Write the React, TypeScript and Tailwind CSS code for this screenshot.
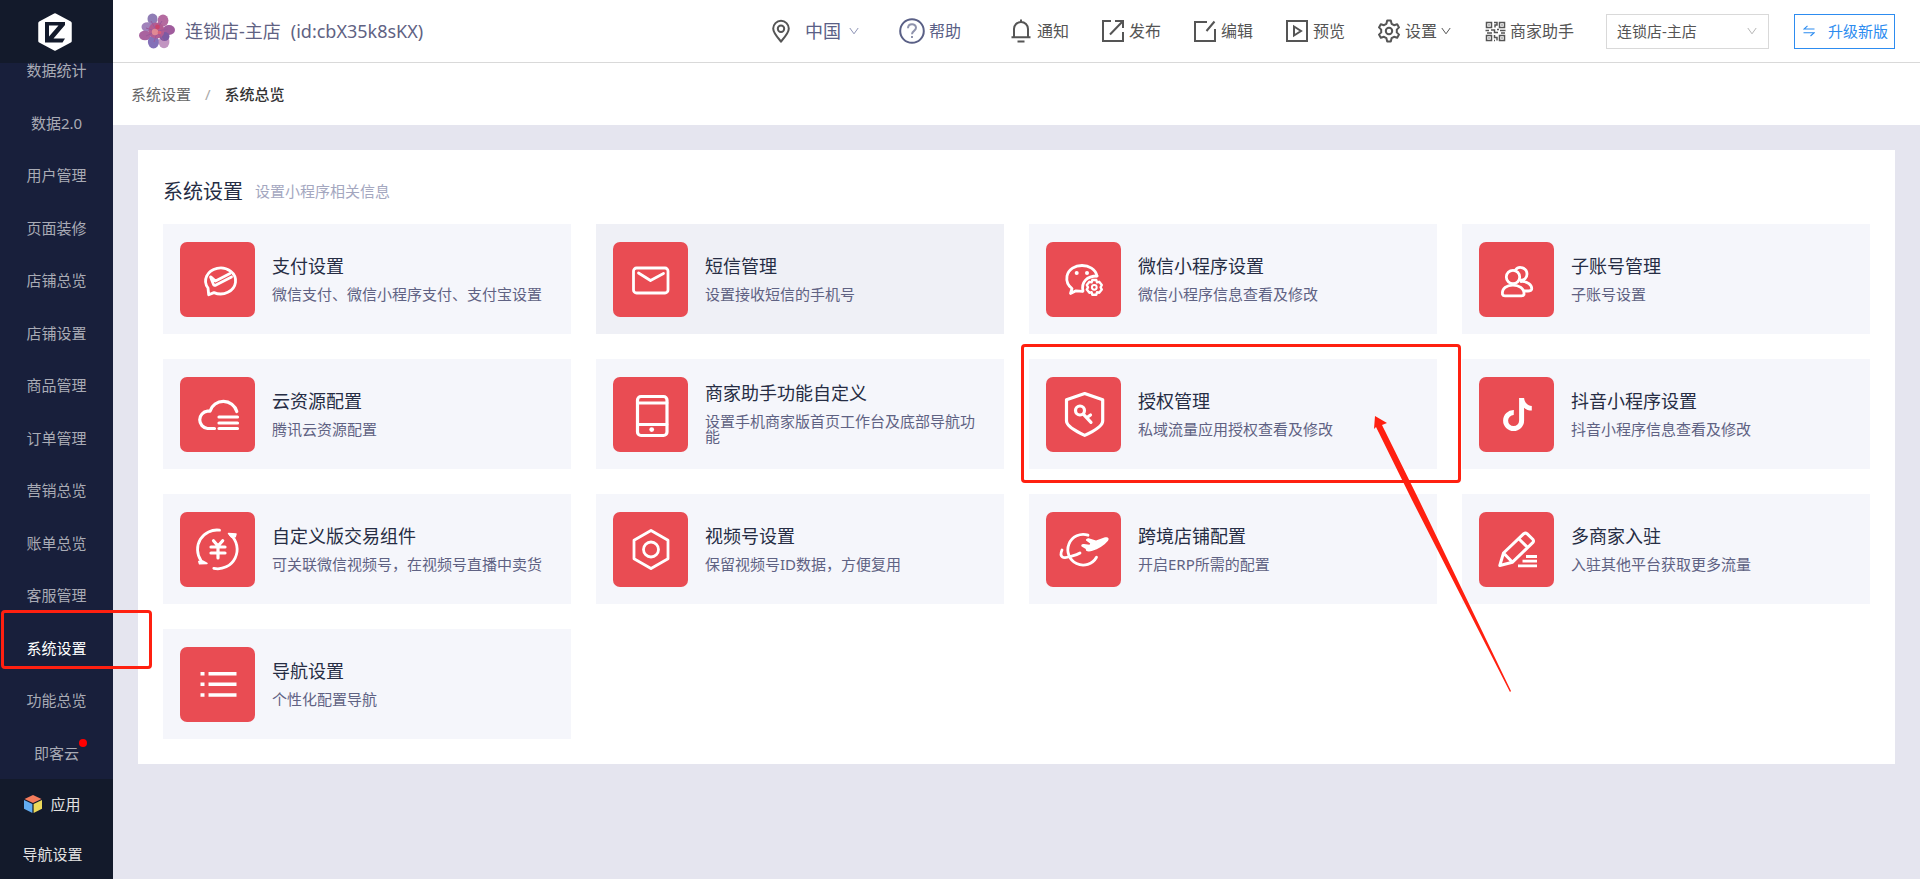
import { useState, type ReactNode } from "react";
import clsx from "clsx";

const NAV_ITEMS = [
  "数据统计",
  "数据2.0",
  "用户管理",
  "页面装修",
  "店铺总览",
  "店铺设置",
  "商品管理",
  "订单管理",
  "营销总览",
  "账单总览",
  "客服管理",
  "系统设置",
  "功能总览",
  "即客云",
];

type Setting = {
  title: string;
  desc: string;
  icon: ReactNode;
  hovered?: boolean;
  marked?: boolean;
};

// every icon is drawn on the 75x75 tile
const SETTINGS: Setting[] = [
  {
    title: "支付设置",
    desc: "微信支付、微信小程序支付、支付宝设置",
    icon: (
      <>
        <path d="M28 46 A15 13 0 1 1 34 50.6 L28.7 52.8 Z" />
        <path d="M30.5 35 L33.5 42.5 Q34.3 44 36 43 L51.5 35 M31 35 L35.5 39 L50 31.5" />
      </>
    ),
  },
  {
    title: "短信管理",
    desc: "设置接收短信的手机号",
    hovered: true,
    icon: (
      <>
        <rect x="20.5" y="26" width="34.5" height="25" rx="3" />
        <path d="M25.5 31 L37.5 38.5 L50.5 31.5" />
      </>
    ),
  },
  {
    title: "微信小程序设置",
    desc: "微信小程序信息查看及修改",
    icon: (
      <>
        <path d="M51 34 C48 20 24 20 21 34 C20 40 22 43.5 26 46.5 L24.5 51.5 L30 48.8 L36.5 49.3" />
        <path d="M37 49 C35 40 41 34 51 34" />
        <circle cx="30.7" cy="31" r="2" fill="white" stroke="none" />
        <circle cx="41" cy="31" r="2" fill="white" stroke="none" />
        <circle cx="48.3" cy="45.3" r="2.4" strokeWidth="2" />
        <path
          strokeWidth="2.4"
          d="M46.3 38 L50.3 38 L51 40.3 L53.2 39.8 L55.8 43 L54.6 45.3 L55.8 47.6 L53.2 50.8 L51 50.2 L50.3 52.8 L46.3 52.8 L45.6 50.2 L43.4 50.8 L40.8 47.6 L42 45.3 L40.8 43 L43.4 39.8 L45.6 40.3 Z"
        />
      </>
    ),
  },
  {
    title: "子账号管理",
    desc: "子账号设置",
    icon: (
      <>
        <circle cx="34" cy="35" r="6.7" />
        <path d="M23.5 52.5 C21.5 40 46 40 45 52.5 C44.5 54 43 53.8 42 53.8 H26 C25 53.8 24 53.8 23.5 52.5 Z" />
        <path d="M36.5 28 C40 23 48 26 48 32 C48 36 45 38.5 41.5 38 M42 39.5 C48 39 53.5 43 52.6 47.5 C52 49 50 49 46 49" />
      </>
    ),
  },
  {
    title: "云资源配置",
    desc: "腾讯云资源配置",
    icon: (
      <>
        <path
          strokeWidth="3.2"
          d="M34.5 51.5 H27.5 A8.7 8.7 0 0 1 27.5 34.2 H30 A14 14 0 0 1 56.8 34.5"
        />
        <path strokeWidth="3.2" d="M39 40 H57.5 M39 46 H57.5 M39 51.5 H57.5" />
      </>
    ),
  },
  {
    title: "商家助手功能自定义",
    desc: "设置手机商家版首页工作台及底部导航功能",
    icon: (
      <>
        <rect x="24.5" y="19.5" width="29.5" height="39" rx="3.5" strokeWidth="3.2" />
        <path d="M25 26 H54 M25 47.5 H54" />
        <circle cx="38.7" cy="52.6" r="2.4" fill="white" stroke="none" />
      </>
    ),
  },
  {
    title: "授权管理",
    desc: "私域流量应用授权查看及修改",
    marked: true,
    icon: (
      <>
        <path
          strokeWidth="3.2"
          d="M38.7 16.5 L56.7 22.8 V44 C56.7 49 46 55 38.7 58.4 C31.4 55 20.5 49 20.5 44 V22.8 Z"
        />
        <circle cx="34" cy="33.5" r="4.5" strokeWidth="3.2" />
        <path strokeWidth="3.2" d="M37.5 37.3 L45 45.3 M41 40.5 L44.5 38" />
      </>
    ),
  },
  {
    title: "抖音小程序设置",
    desc: "抖音小程序信息查看及修改",
    icon: (
      <>
        <path
          strokeWidth="5"
          strokeLinecap="butt"
          d="M34.8 35.6 A8 8 0 1 0 42.6 43.5 V21"
        />
        <path
          fill="white"
          stroke="none"
          d="M40.3 21 H45 C45.6 25.5 48.5 28.6 52.8 29 V33.6 C49.5 33.6 46.8 32.4 44.6 30.6 Z"
        />
      </>
    ),
  },
  {
    title: "自定义版交易组件",
    desc: "可关联微信视频号，在视频号直播中卖货",
    icon: (
      <>
        <path d="M39.5 18.2 A19.4 19.4 0 0 0 21 48.5 M50.5 22.8 A19.4 19.4 0 0 1 33.8 56.4" />
        <path fill="white" strokeWidth="1.5" d="M18.8 49.5 L22.5 49 L27 51.5 L19.5 51.8 Z M48.5 21.5 L56 22 L55.2 24.8 L51.5 25 Z" />
        <path strokeWidth="3.2" d="M33.5 28.7 L38 34 L42.7 28.7 M31 35 H45 M31 41 H45 M38 35 V46" />
      </>
    ),
  },
  {
    title: "视频号设置",
    desc: "保留视频号ID数据，方便复用",
    icon: (
      <>
        <path d="M38 18.5 L55 28.3 V46.7 L38 56.5 L21 46.7 V28.3 Z" />
        <circle cx="38" cy="37.5" r="7.5" />
      </>
    ),
  },
  {
    title: "跨境店铺配置",
    desc: "开启ERP所需的配置",
    icon: (
      <>
        <path d="M42 23.2 A15.3 15.3 0 1 0 50.5 45.2" />
        <path d="M16 38 C13 45 17 47 24 44.5 C28 43.5 31 43 34 41" />
        <path
          fill="white"
          stroke="none"
          d="M59 25.3 C62 24.6 63.8 26.5 61.8 29 C58 33.5 52 37 46.5 38.8 C43 40 39.5 39.8 39.8 37 L35.6 34.6 C34.6 33 36 31.5 38 32 L43.5 32.8 L44.2 31.5 L40 28.5 C39.6 26.8 41.5 25.8 43.5 26.4 L50 28.4 Z"
        />
      </>
    ),
  },
  {
    title: "多商家入驻",
    desc: "入驻其他平台获取更多流量",
    icon: (
      <>
        <path
          strokeWidth="3"
          d="M20.8 53.5 L24.5 41 L44.8 21.7 Q46.5 20.5 48 21.7 L54 27.5 Q55 29 54 30.3 L33.5 50.2 Z M24.5 41 L33.5 50.2 M40 27 L48.5 35.3"
        />
        <path strokeLinecap="butt" d="M47 44.5 H58 M43.5 49.2 H58 M39 53.8 H58" />
      </>
    ),
  },
  {
    title: "导航设置",
    desc: "个性化配置导航",
    icon: (
      <path
        strokeWidth="3.6"
        strokeLinecap="butt"
        d="M20.5 26.7 H24.5 M28.5 26.7 H56.5 M20.5 37.3 H24.5 M28.5 37.3 H56.5 M20.5 48 H24.5 M28.5 48 H56.5"
      />
    ),
  },
];

function Chevron({ className }: { className?: string }) {
  return (
    <svg viewBox="0 0 10 8" className={clsx("h-2 w-2.5", className)} fill="none" stroke="currentColor">
      <path d="M0.8 1 L5 6.8 L9.2 1" />
    </svg>
  );
}

function Logo() {
  return (
    <svg viewBox="0 0 34 38" className="h-[38px] w-[34px]">
      <path
        d="M17 2 L32 10 V28 L17 36 L2 28 V10 Z"
        fill="white"
        stroke="white"
        strokeWidth="3.5"
        strokeLinejoin="round"
      />
      <path d="M7 9 H27 V12 L15.5 25.5 H27 L24.5 29.5 H7 Z" fill="#131a2b" />
      <path d="M11 12.5 H20.5 L11 23.5 Z" fill="white" />
    </svg>
  );
}

function Flower() {
  return (
    <svg viewBox="0 0 36 36" className="size-9">
      <ellipse cx="13.5" cy="6" rx="5" ry="5.6" fill="#8f7db5" />
      <ellipse cx="24" cy="7.5" rx="5.4" ry="6" fill="#b46ba0" />
      <ellipse cx="8.5" cy="14" rx="6" ry="4.8" fill="#a183bb" />
      <ellipse cx="30" cy="17" rx="6" ry="5" fill="#a05c9d" />
      <ellipse cx="6" cy="22.5" rx="6" ry="4.8" fill="#a9639f" />
      <ellipse cx="14.5" cy="29" rx="5.6" ry="6.4" fill="#8471b8" />
      <ellipse cx="25" cy="29" rx="5.4" ry="6.2" fill="#c295c1" />
      <ellipse cx="25.5" cy="23.5" rx="5" ry="4.5" fill="#7c5aa2" />
      <circle cx="17.5" cy="17.5" r="8" fill="#b25d92" />
      <path
        d="M17 17 L12 8 M18 16 L23 8 M16 18 L7 15 M19 18 L29 16 M16 19 L7 23 M18 20 L15 29 M19 20 L25 28"
        stroke="#9a5a9c"
        strokeWidth="1"
      />
      <circle cx="16" cy="19" r="3.2" fill="#e08a94" />
      <circle cx="18.5" cy="14" r="2.4" fill="#c8456c" />
      <circle cx="20.5" cy="19.5" r="1.8" fill="#d8607a" />
    </svg>
  );
}

function Cube() {
  return (
    <svg viewBox="0 0 18 18" className="size-[18px]">
      <path d="M9 0 L17.5 4 L9 8 L0.5 4 Z" fill="#f47c5c" />
      <path d="M0 5 L8.4 9 V18 L0 13.8 Z" fill="#62adf2" />
      <path d="M18 5 L9.6 9 V18 L18 13.8 Z" fill="#ecd95a" />
    </svg>
  );
}

function ToolIcon({ children }: { children: ReactNode }) {
  return (
    <svg
      viewBox="0 0 24 24"
      className="size-6"
      fill="none"
      stroke="currentColor"
      strokeWidth="2"
    >
      {children}
    </svg>
  );
}

function Tool({ label, icon, className, children }: {
  label: string;
  icon: ReactNode;
  className?: string;
  children?: ReactNode;
}) {
  return (
    <button className={clsx("flex items-center gap-1 text-base", className ?? "text-[#555]")}>
      {icon}
      <span>{label}</span>
      {children}
    </button>
  );
}

function QrIcon() {
  return (
    <svg viewBox="0 0 21 21" className="size-[21px]" fill="none" stroke="currentColor" strokeWidth="1.5">
      <rect x="1.5" y="1.5" width="5" height="5" />
      <rect x="14.5" y="1.5" width="5" height="5" />
      <rect x="1.5" y="14.5" width="5" height="5" />
      <rect x="14.5" y="14.5" width="5" height="5" />
      <path d="M3.5 4 H4.5 M16.5 4 H17.5 M3.5 17 H4.5 M16.5 17 H17.5" />
      <path d="M9 1.5 H12 V4 H10 V6.5 M0.5 9.5 H4 M6 9 H9.5 V11.5 H13 M15 9.5 H20.5 M2 12 H7 M12 8.5 H14 M16 12 H20 M9.5 14 V16.5 H12 V19.5 M9 19.5 H10" />
    </svg>
  );
}

function Sidebar() {
  const [active, setActive] = useState("系统设置");

  return (
    <aside className="sticky top-0 z-20 flex h-screen w-[113px] shrink-0 flex-col bg-[#181f3b] text-[15px]">
      <div className="z-10 flex h-[63px] shrink-0 items-center justify-center bg-[#131a2b] pr-1">
        <Logo />
      </div>

      {/* the list is scrolled to its end, its first row slides under the logo */}
      <nav className="flex min-h-0 flex-1 flex-col justify-end">
        <ul className="flex h-[735px] shrink-0 flex-col">
          {NAV_ITEMS.map((item) => (
            <li key={item} className="relative flex flex-1">
              <button
                onClick={() => setActive(item)}
                className={clsx("flex-1 text-center", item === active ? "text-white" : "text-[#a9abb5]")}
              >
                <span className="relative">
                  {item}
                  {item === "即客云" && (
                    <i className="absolute -right-2 -top-1 size-2 rounded-full bg-[#ff0000]" />
                  )}
                </span>
              </button>
              {item === "系统设置" && (
                <span className="pointer-events-none absolute -top-3 left-px h-[59px] w-[151px] rounded-sm border-3 border-[#ff2010]" />
              )}
            </li>
          ))}
        </ul>
      </nav>

      <div className="z-10 flex shrink-0 flex-col bg-[#131a2b] pr-2 text-[#e2e2e2]">
        <button className="flex h-[50px] items-center justify-center gap-2">
          <Cube />
          应用
        </button>
        <button className="h-[50px]">导航设置</button>
      </div>
    </aside>
  );
}

function Header() {
  return (
    <header className="flex h-[63px] items-center justify-between border-b border-[#d9d9d9] bg-white pl-[26px] pr-[25px]">
      <div className="flex items-center gap-2.5 text-lg text-[#5f6283]">
        <Flower />
        <span>连锁店-主店</span>
        <span>(id:cbX35k8sKX)</span>
      </div>

      <div className="flex items-center gap-8">
        <button className="mr-2 flex items-center gap-3 text-lg text-[#5a6086]">
          <svg viewBox="0 0 24 24" className="size-6 text-[#555]" fill="none" stroke="currentColor" strokeWidth="2">
            <path d="M12 22.5 C8 18 4.2 14 4.2 9.6 A7.8 7.8 0 0 1 19.8 9.6 C19.8 14 16 18 12 22.5 Z" />
            <circle cx="12" cy="9.8" r="3.2" />
          </svg>
          <span className="flex items-center gap-2">
            中国
            <Chevron className="text-[#8d93b5]" />
          </span>
        </button>
        <Tool
          label="帮助"
          className="mr-4 text-[#5a6086]"
          icon={
            <svg viewBox="0 0 26 26" className="size-[26px]" fill="none" stroke="currentColor" strokeWidth="2">
              <circle cx="13" cy="13" r="11.8" />
              <path
                stroke="#8f93ac"
                d="M9 10.3 C9 5 17 5 17 9.8 C17 13 13 12.8 13 16.3 M13 18 V20"
              />
            </svg>
          }
        />
        <Tool
          label="通知"
          icon={
            <ToolIcon>
              <path d="M5 18 V10 A7 7 0 0 1 19 10 V18 M2.5 18.3 H21.5 M12 0.5 V3 M8.5 22.5 H15.5" />
            </ToolIcon>
          }
        />
        <Tool
          label="发布"
          icon={
            <ToolIcon>
              <path d="M10 2 H2 V22 H22 V13 M14 2 H22 V9 M21.5 2.5 L9 15.5" />
            </ToolIcon>
          }
        />
        <Tool
          label="编辑"
          icon={
            <ToolIcon>
              <path d="M14 3 H2 V22 H22 V10 M21.5 2.5 L13.5 12" />
            </ToolIcon>
          }
        />
        <Tool
          label="预览"
          icon={
            <ToolIcon>
              <path d="M2 2 H22 V22 H2 Z M9 7.5 V16.5 L16 12 Z" />
            </ToolIcon>
          }
        />
        <Tool
          label="设置"
          className="mr-0.5 text-[#555]"
          icon={
            <ToolIcon>
              <path
                strokeLinejoin="round"
                d="M10.2 1.5 H13.8 L14.6 4.8 L17 6.2 L20.2 5.2 L22 8.4 L19.8 10.6 V13.4 L22 15.6 L20.2 18.8 L17 17.8 L14.6 19.2 L13.8 22.5 H10.2 L9.4 19.2 L7 17.8 L3.8 18.8 L2 15.6 L4.2 13.4 V10.6 L2 8.4 L3.8 5.2 L7 6.2 L9.4 4.8 Z"
              />
              <circle cx="12" cy="12" r="3.2" />
            </ToolIcon>
          }
        >
          <Chevron />
        </Tool>
        <Tool label="商家助手" icon={<QrIcon />} />

        <div className="flex items-center gap-[25px]">
          <label className="relative flex items-center text-[15px] text-[#555]">
            <select
              aria-label="店铺"
              className="h-[35px] w-[163px] appearance-none border border-[#d9d9d9] bg-white pl-2.5 pr-8"
            >
              <option>连锁店-主店</option>
            </select>
            <Chevron className="pointer-events-none absolute right-3 text-[#b5b5b5]" />
          </label>
          <button className="flex h-[35px] w-[101px] items-center justify-between border border-[#2d8cf0] pl-2 pr-1.5 text-[15px] text-[#2d8cf0]">
            <svg viewBox="0 0 12 12" className="size-3" fill="none" stroke="currentColor" strokeWidth="1.1">
              <path d="M11.5 4 H1 L4.5 0.8 M0.5 7.8 H11 L7.5 11" />
            </svg>
            升级新版
          </button>
        </div>
      </div>
    </header>
  );
}

function SettingCard({ title, desc, icon, hovered, marked }: Setting) {
  return (
    <a
      href="#"
      className={clsx(
        "relative flex h-[110px] items-center gap-[17px] px-[17px]",
        hovered ? "bg-[#eff0f6]" : "bg-[#f5f6fb]",
      )}
    >
      <svg
        viewBox="0 0 75 75"
        className="size-[75px] shrink-0 rounded-[7px] bg-[#e94c53]"
        fill="none"
        stroke="white"
        strokeWidth="2.8"
        strokeLinecap="round"
        strokeLinejoin="round"
      >
        {icon}
      </svg>
      <div className="min-w-0">
        <h3 className="text-lg leading-[18px] text-[#262d44]">{title}</h3>
        <p className="mt-3 text-[15px] leading-[15px] text-[#5f6283]">{desc}</p>
      </div>

      {marked && (
        <>
          <span className="pointer-events-none absolute -bottom-3.5 -left-2 -right-6 -top-[15px] z-10 rounded-sm border-3 border-[#ff2010]" />
          <svg
            viewBox="0 0 137 276"
            className="pointer-events-none absolute left-[345px] top-[57px] z-10 h-[276px] w-[137px]"
          >
            <path d="M1 0 L13 7 L8 9 L11 15 L45 84 L137 275 L136 276 L38 84 L5 17 L2 11 L0 13 Z" fill="#ff2010" />
          </svg>
        </>
      )}
    </a>
  );
}

export default function App() {
  return (
    <div className="flex min-h-screen bg-[#e5e5ef] font-['Noto_Sans','Noto_Sans_CJK_SC',sans-serif]">
      <Sidebar />
      <div className="min-w-0 flex-1">
        <Header />
        <nav className="flex h-[62px] items-center gap-3.5 bg-white pl-[18px] text-[15px]">
          <a href="#" className="text-[#666]">系统设置</a>
          <span className="text-[#aaa]">/</span>
          <span className="font-medium text-[#333]">系统总览</span>
        </nav>

        <main className="m-[25px] bg-white p-[25px]">
          <div className="mb-4 flex h-[33px] items-center gap-3">
            <h2 className="text-xl text-[#262d44]">系统设置</h2>
            <span className="text-[15px] text-[#a4a7bf]">设置小程序相关信息</span>
          </div>
          <div className="grid grid-cols-4 gap-[25px]">
            {SETTINGS.map((s) => (
              <SettingCard key={s.title} {...s} />
            ))}
          </div>
        </main>
      </div>
    </div>
  );
}
